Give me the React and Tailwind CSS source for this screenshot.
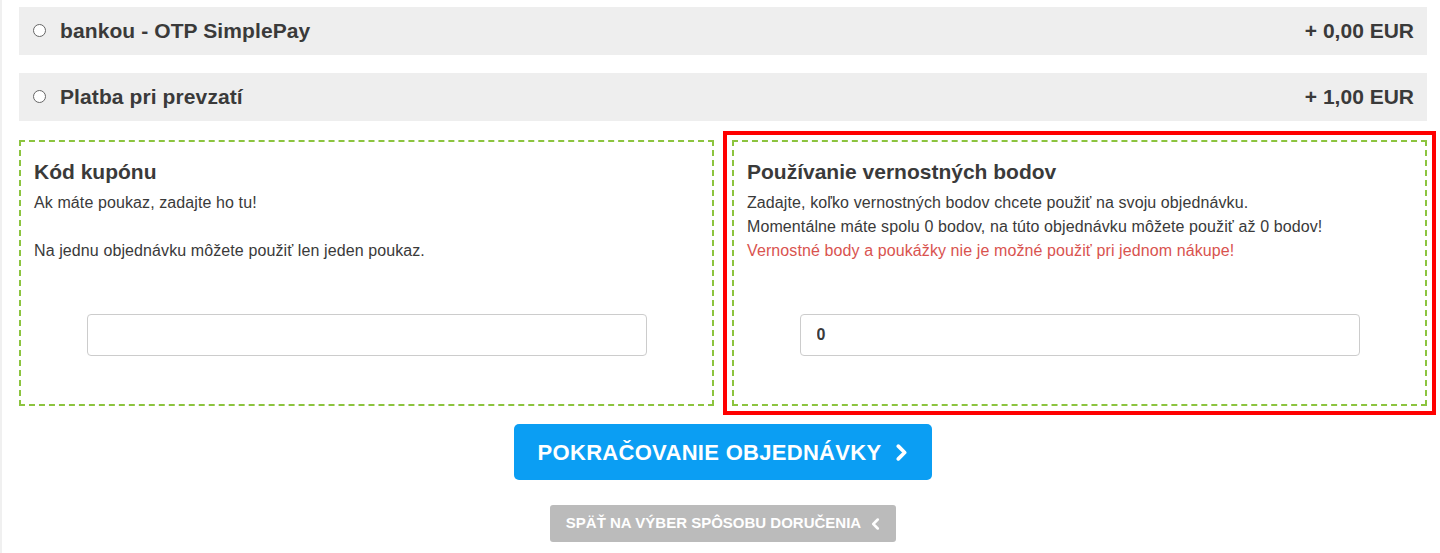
import React from "react";

const payments = [
  { id: "simplepay", label: "bankou - OTP SimplePay", price: "+ 0,00 EUR" },
  { id: "cod", label: "Platba pri prevzatí", price: "+ 1,00 EUR" },
];

const ChevronRight = ({ className }) => (
  <svg viewBox="0 0 12 16" className={className} fill="none">
    <polyline points="3,2 9,8 3,14" stroke="currentColor" strokeWidth="3.4" strokeLinecap="round" strokeLinejoin="round" />
  </svg>
);

const ChevronLeft = ({ className }) => (
  <svg viewBox="0 0 12 16" className={className} fill="none">
    <polyline points="9,2 3,8 9,14" stroke="currentColor" strokeWidth="3.4" strokeLinecap="round" strokeLinejoin="round" />
  </svg>
);

const PaymentRow = ({ label, price }) => (
  <label className="flex items-center h-[48px] bg-[#eeeeee] pl-[14px] pr-[13px] pb-[1px] cursor-pointer">
    <span className="w-[13px] h-[13px] rounded-full border border-[#666] bg-white shrink-0" />
    <span className="ml-[14px] text-[21px] tracking-[0.1px] font-bold text-[#3a3a3a]">{label}</span>
    <span className="ml-auto text-[21px] font-bold text-[#3a3a3a]">{price}</span>
  </label>
);

const Box = ({ title, children, value }) => (
  <div className="h-[266px] border-2 border-dashed border-[#8cc43f] px-[13px] pt-[18px] flex flex-col">
    <h3 className="text-[21px] leading-[24px] font-bold text-[#3a3a3a]">{title}</h3>
    <div className="mt-[7px] h-[123px] text-[16px] tracking-[0.1px] leading-[24px] text-[#3a3a3a]">{children}</div>
    <div className="flex justify-center">
      <input
        type="text"
        defaultValue={value}
        className="w-[560px] h-[42px] border border-[#cccccc] rounded-[4px] px-[16px] text-[16px] font-bold text-[#3a3a3a] outline-none"
      />
    </div>
  </div>
);

export default function App() {
  return (
    <div
      className="min-h-[553px] bg-white border-l-2 border-[#f0f0f0] pt-[7px] pl-[17px] pr-[13px]"
      style={{ fontFamily: '"Liberation Sans", Arial, sans-serif' }}
    >
      <div className="flex flex-col gap-[18px]">
        {payments.map((p) => (
          <PaymentRow key={p.id} label={p.label} price={p.price} />
        ))}
      </div>

      <div className="mt-[19px] grid grid-cols-2 gap-[18px]">
        <Box title="Kód kupónu" value="">
          <p>Ak máte poukaz, zadajte ho tu!</p>
          <p>&nbsp;</p>
          <p>Na jednu objednávku môžete použiť len jeden poukaz.</p>
        </Box>
        <div className="outline-4 outline-solid outline-[#ff0000] outline-offset-[5px]">
          <Box title="Používanie vernostných bodov" value="0">
            <p>Zadajte, koľko vernostných bodov chcete použiť na svoju objednávku.</p>
            <p>Momentálne máte spolu 0 bodov, na túto objednávku môžete použiť až 0 bodov!</p>
            <p className="text-[#d9534f]">Vernostné body a poukážky nie je možné použiť pri jednom nákupe!</p>
          </Box>
        </div>
      </div>

      <div className="mt-[18px] flex flex-col items-center">
        <button className="w-[418px] h-[56px] rounded-[5px] bg-[#0b9ef3] text-white text-[22px] tracking-[0.3px] font-bold flex items-center justify-center gap-[14px]">
          POKRAČOVANIE OBJEDNÁVKY
          <ChevronRight className="w-[13px] h-[17px]" />
        </button>
        <button className="mt-[25px] w-[346px] h-[37px] rounded-[3px] bg-[#bbbbbb] text-white text-[15px] font-bold flex items-center justify-center gap-[10px]">
          SPÄŤ NA VÝBER SPÔSOBU DORUČENIA
          <ChevronLeft className="w-[9px] h-[12px]" />
        </button>
      </div>
    </div>
  );
}
